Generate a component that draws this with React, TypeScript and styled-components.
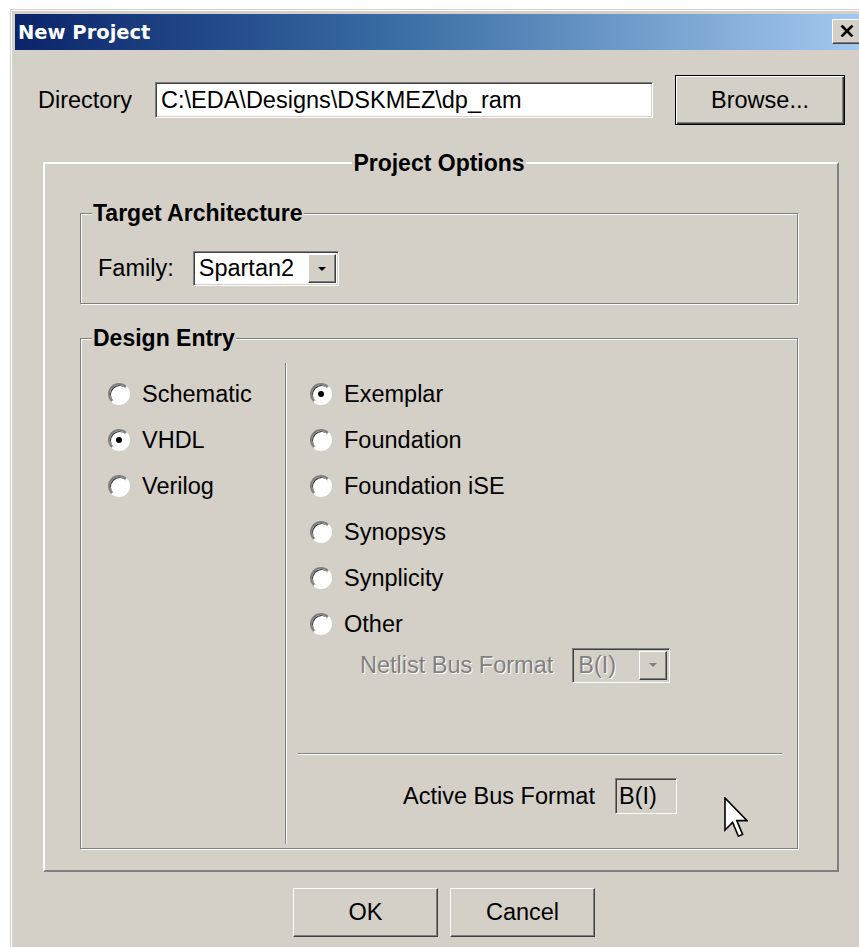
import React from "react";
import styled, { createGlobalStyle } from "styled-components";

const face = "#d4d0c8";
const shadow = "#808080";
const darkShadow = "#404040";
const highlight = "#ffffff";

const GlobalStyle = createGlobalStyle`
  html, body {
    margin: 0;
    padding: 0;
    background: #fff;
    overflow: hidden;
  }
  body {
    font-family: "Liberation Sans", Arial, sans-serif;
    color: #000;
  }
`;

const Desktop = styled.div`
  padding: 9px 0 0 10px;
  height: 947px;
  box-sizing: border-box;
`;

const Window = styled.div`
  width: 859px;
  height: 960px;
  box-sizing: border-box;
  background: ${face};
  border-top: 1px solid ${face};
  border-left: 1px solid ${face};
  box-shadow: inset 1px 1px 0 ${highlight};
  padding: 4px 0 0 4px;
  display: flex;
  flex-direction: column;
`;

const TitleBar = styled.div`
  height: 36px;
  flex: none;
  display: flex;
  align-items: center;
  justify-content: space-between;
  padding: 0 7px 0 3px;
  background: linear-gradient(90deg, #0a246a 0%, #3a6ea5 45%, #a6caf0 100%);
`;

const Title = styled.span`
  color: #fff;
  font-family: "DejaVu Sans", Tahoma, sans-serif;
  font-weight: bold;
  font-size: 19.5px;
`;

const raised = `
  border-style: solid;
  border-width: 1px;
  border-color: ${highlight} ${darkShadow} ${darkShadow} ${highlight};
  box-shadow: inset -1px -1px 0 ${shadow}, inset 1px 1px 0 ${face};
`;

const sunken = `
  border-style: solid;
  border-width: 1px;
  border-color: ${shadow} ${highlight} ${highlight} ${shadow};
  box-shadow: inset 1px 1px 0 ${darkShadow}, inset -1px -1px 0 ${face};
`;

const CloseButton = styled.div`
  width: 30px;
  height: 25px;
  margin-top: -2px;
  box-sizing: border-box;
  background: ${face};
  ${raised}
  display: flex;
  align-items: center;
  justify-content: center;
`;

const Body = styled.div`
  display: flex;
  flex-direction: column;
`;

const DirectoryRow = styled.div`
  display: flex;
  align-items: center;
  margin-top: 25px;
  padding-left: 23px;
`;

const Label = styled.span<{ $disabled?: boolean }>`
  font-size: 23.5px;
  white-space: nowrap;
  color: ${(p) => (p.$disabled ? shadow : "#000")};
  text-shadow: ${(p) => (p.$disabled ? `1px 1px 0 ${highlight}` : "none")};
`;

const DirectoryLabel = styled(Label)`
  margin-right: 23px;
`;

const TextField = styled.div`
  width: 498px;
  height: 36px;
  box-sizing: border-box;
  background: #fff;
  ${sunken}
  display: flex;
  align-items: center;
  padding: 0 5px;
  font-size: 23.5px;
`;

const PushButton = styled.div<{ $width: number; $height: number; $default?: boolean }>`
  width: ${(p) => p.$width}px;
  height: ${(p) => p.$height}px;
  box-sizing: border-box;
  background: ${face};
  display: flex;
  align-items: center;
  justify-content: center;
  font-size: 23.5px;
  ${(p) =>
    p.$default
      ? `border: 1px solid #000;
         box-shadow: inset 1px 1px 0 ${highlight}, inset -1px -1px 0 ${darkShadow}, inset -2px -2px 0 ${shadow};`
      : raised}
`;

const BrowseButton = styled(PushButton)`
  margin-left: 22px;
`;

const OuterGroup = styled.fieldset`
  margin: 25px 0 0 28px;
  width: 796px;
  min-width: 0;
  box-sizing: border-box;
  padding: 24px 39px 21px 35px;
  border-style: solid;
  border-width: 2px;
  border-color: ${highlight} ${shadow} ${shadow} ${highlight};
`;

const OuterLegend = styled.legend`
  margin: 0 auto;
  padding: 0 1px;
  font-size: 23px;
  line-height: 26px;
  font-weight: bold;
  background: ${face};
`;

const Group = styled.fieldset<{ $gap?: number }>`
  margin: ${(p) => p.$gap ?? 0}px 0 0 0;
  min-width: 0;
  padding: 0;
  border: 1px solid ${shadow};
  box-shadow: 1px 1px 0 ${highlight}, inset 1px 1px 0 ${highlight};
`;

const GroupLegend = styled.legend`
  margin-left: 11px;
  padding: 0 1px;
  font-size: 23px;
  line-height: 26px;
  font-weight: bold;
  background: ${face};
`;

const FamilyRow = styled.div`
  display: flex;
  align-items: center;
  gap: 19px;
  padding: 25px 0 17px 17px;
`;

const Combo = styled.div<{ $width: number; $disabled?: boolean }>`
  width: ${(p) => p.$width}px;
  height: 35px;
  flex: none;
  box-sizing: border-box;
  background: ${(p) => (p.$disabled ? face : "#fff")};
  ${sunken}
  display: flex;
  align-items: center;
  justify-content: space-between;
  padding: 2px;
`;

const ComboText = styled(Label)`
  padding-left: 3px;
`;

const ArrowButton = styled.div`
  width: 28px;
  height: 29px;
  box-sizing: border-box;
  background: ${face};
  ${raised}
  display: flex;
  align-items: center;
  justify-content: center;
`;

const Arrow = styled.span<{ $disabled?: boolean }>`
  width: 0;
  height: 0;
  border-left: 4px solid transparent;
  border-right: 4px solid transparent;
  border-top: 4px solid ${(p) => (p.$disabled ? shadow : "#000")};
`;

const EntryGrid = styled.div`
  display: grid;
  grid-template-columns: 204px 2px 1fr;
  padding: 12px 0 4px 0;
`;

const Divider = styled.div`
  border-left: 1px solid ${shadow};
  border-right: 1px solid ${highlight};
`;

const LeftColumn = styled.div`
  padding: 8px 0 0 27px;
`;

const RightColumn = styled.div`
  position: relative;
  display: flex;
  flex-direction: column;
  padding: 8px 15px 30px 11px;
`;

const RadioList = styled.div`
  padding-left: 12px;
`;

const RadioRow = styled.div`
  height: 46px;
  display: flex;
  align-items: center;
  gap: 12px;
`;

const RadioCircle = styled.span`
  width: 22px;
  height: 22px;
  flex: none;
  box-sizing: border-box;
  border-radius: 50%;
  border: 2px solid;
  border-color: ${shadow} ${highlight} ${highlight} ${shadow};
  background: #fff;
  box-shadow: inset 1px 1px 0 ${darkShadow};
  display: flex;
  align-items: center;
  justify-content: center;
`;

const RadioDot = styled.span`
  width: 6px;
  height: 6px;
  border-radius: 50%;
  background: #000;
`;

const NetlistRow = styled.div`
  display: flex;
  align-items: center;
  gap: 19px;
  padding-left: 62px;
  height: 36px;
`;

const Separator = styled.div`
  margin-top: 70px;
  border-top: 1px solid ${shadow};
  border-bottom: 1px solid ${highlight};
`;

const ActiveRow = styled.div`
  margin-top: 23px;
  display: flex;
  align-items: center;
  justify-content: center;
  gap: 20px;
`;

const ReadOnlyField = styled.div`
  width: 62px;
  height: 36px;
  box-sizing: border-box;
  ${sunken}
  display: flex;
  align-items: center;
  padding-left: 3px;
  font-size: 23.5px;
`;

const Pointer = styled.svg`
  position: absolute;
  left: 437px;
  top: 434px;
`;

const ButtonRow = styled.div`
  display: flex;
  justify-content: center;
  gap: 12px;
  margin-top: 16px;
  padding-left: 4px;
`;

const Radio: React.FC<{ label: string; checked?: boolean }> = ({ label, checked }) => (
  <RadioRow>
    <RadioCircle>{checked && <RadioDot />}</RadioCircle>
    <Label>{label}</Label>
  </RadioRow>
);

const languages = ["Schematic", "VHDL", "Verilog"];
const synthesisTools = ["Exemplar", "Foundation", "Foundation iSE", "Synopsys", "Synplicity", "Other"];

export default function App() {
  return (
    <>
      <GlobalStyle />
      <Desktop>
        <Window>
          <TitleBar>
            <Title>New Project</Title>
            <CloseButton>
              <svg width="14" height="12" viewBox="0 0 14 12">
                <path d="M1.5 0.5 L12.5 11.5 M12.5 0.5 L1.5 11.5" stroke="#000" strokeWidth="2.6" />
              </svg>
            </CloseButton>
          </TitleBar>
          <Body>
            <DirectoryRow>
              <DirectoryLabel>Directory</DirectoryLabel>
              <TextField>C:\EDA\Designs\DSKMEZ\dp_ram</TextField>
              <BrowseButton $width={170} $height={50} $default>
                Browse...
              </BrowseButton>
            </DirectoryRow>

            <OuterGroup>
              <OuterLegend>Project Options</OuterLegend>

              <Group>
                <GroupLegend>Target Architecture</GroupLegend>
                <FamilyRow>
                  <Label>Family:</Label>
                  <Combo $width={146}>
                    <ComboText>Spartan2</ComboText>
                    <ArrowButton>
                      <Arrow />
                    </ArrowButton>
                  </Combo>
                </FamilyRow>
              </Group>

              <Group $gap={21}>
                <GroupLegend>Design Entry</GroupLegend>
                <EntryGrid>
                  <LeftColumn>
                    {languages.map((lang) => (
                      <Radio key={lang} label={lang} checked={lang === "VHDL"} />
                    ))}
                  </LeftColumn>
                  <Divider />
                  <RightColumn>
                    <RadioList>
                      {synthesisTools.map((tool) => (
                        <Radio key={tool} label={tool} checked={tool === "Exemplar"} />
                      ))}
                    </RadioList>
                    <NetlistRow>
                      <Label $disabled>Netlist Bus Format</Label>
                      <Combo $width={98} $disabled>
                        <ComboText $disabled>B(I)</ComboText>
                        <ArrowButton>
                          <Arrow $disabled />
                        </ArrowButton>
                      </Combo>
                    </NetlistRow>
                    <Separator />
                    <ActiveRow>
                      <Label>Active Bus Format</Label>
                      <ReadOnlyField>B(I)</ReadOnlyField>
                    </ActiveRow>
                    <Pointer width="24" height="42" viewBox="0 0 12 21">
                      <path
                        d="M0.5 0.5 V16.5 L4.3 12.7 L7.2 19.6 L9.3 18.7 L6.4 11.8 H11.5 Z"
                        fill="#fff"
                        stroke="#000"
                        strokeWidth="0.8"
                        strokeLinejoin="miter"
                      />
                    </Pointer>
                  </RightColumn>
                </EntryGrid>
              </Group>
            </OuterGroup>

            <ButtonRow>
              <PushButton $width={145} $height={49}>
                OK
              </PushButton>
              <PushButton $width={145} $height={49}>
                Cancel
              </PushButton>
            </ButtonRow>
          </Body>
        </Window>
      </Desktop>
    </>
  );
}
